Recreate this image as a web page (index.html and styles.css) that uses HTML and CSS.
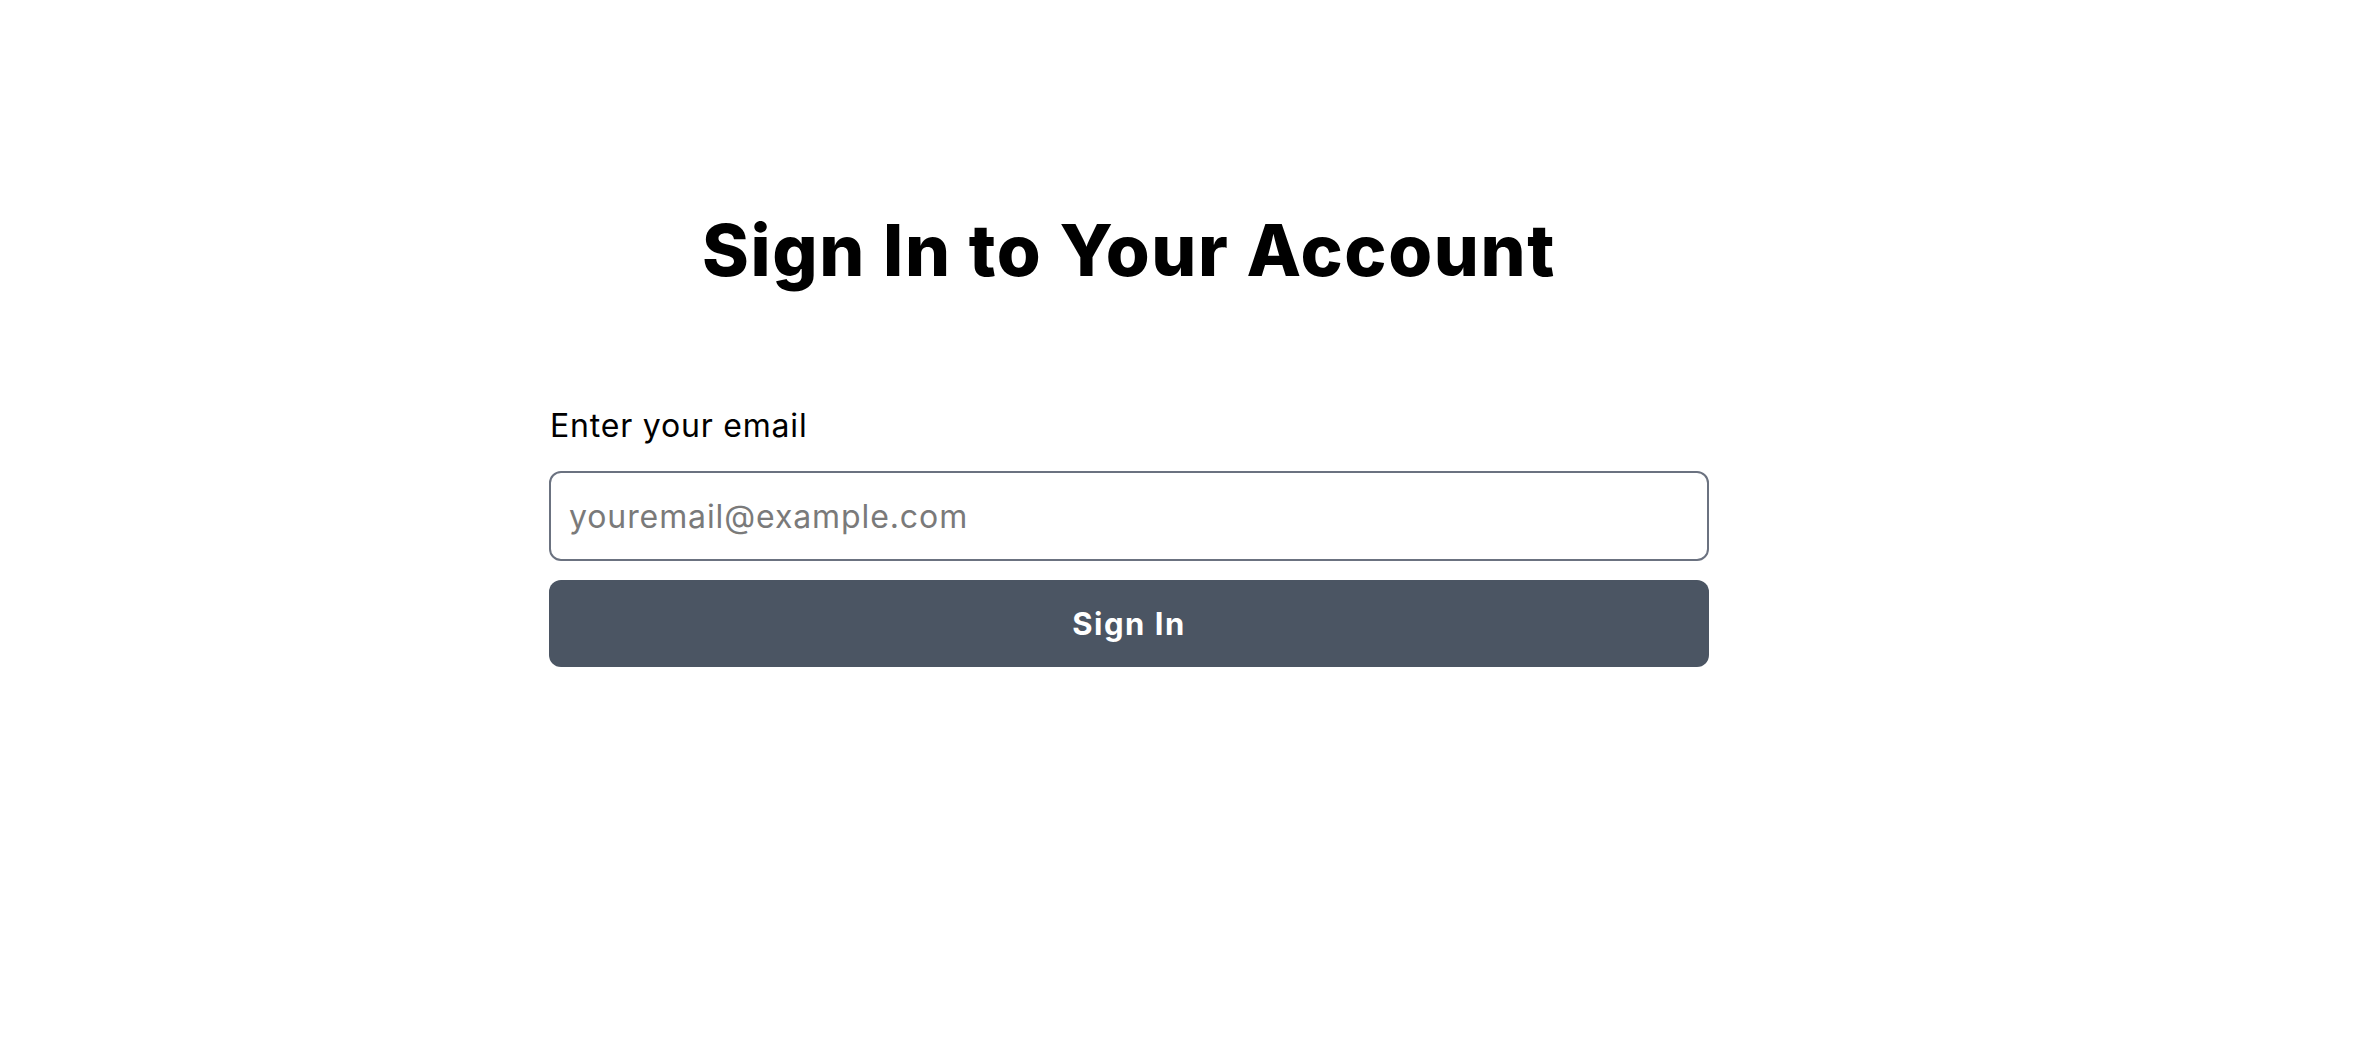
FILE: index.html
```html
<!DOCTYPE html>
<html lang="en">
<head>
<meta charset="utf-8">
<title>Sign In</title>
<link rel="stylesheet" href="styles.css">
</head>
<body>
<main class="page">
  <h1 class="title">Sign In to Your Account</h1>
  <form class="form" onsubmit="return false;">
    <label class="label" for="email">Enter your email</label>
    <input class="input" id="email" type="email" placeholder="youremail@example.com">
    <button class="button" type="submit">Sign In</button>
  </form>
</main>
</body>
</html>
```

FILE: styles.css
```css
html, body {
  margin: 0;
  padding: 0;
  background: #ffffff;
}
body {
  font-family: Inter, "Noto Sans", "Liberation Sans", sans-serif;
  color: #000000;
}
.page {
  width: 1160px;
  margin-left: 549px;
  padding-top: 215px;
  display: flex;
  flex-direction: column;
}
.title {
  margin: 0 0 116px 0;
  font-size: 71px;
  line-height: 71px;
  font-weight: 800;
  text-align: center;
  letter-spacing: 1.6px;
}
.form {
  display: flex;
  flex-direction: column;
}
.label {
  font-size: 32px;
  line-height: 48px;
  margin-bottom: 21px;
  padding-left: 1px;
  letter-spacing: 0.8px;
}
.input {
  box-sizing: border-box;
  height: 90px;
  width: 100%;
  border: 2px solid #6b7280;
  border-radius: 12px;
  padding: 0 18px;
  font-family: inherit;
  font-size: 32px;
  letter-spacing: 0.9px;
  color: #111827;
  outline: none;
}
.input::placeholder {
  color: #7a7a7a;
}
.button {
  box-sizing: border-box;
  margin-top: 19px;
  height: 87px;
  width: 100%;
  border: none;
  border-radius: 12px;
  background: #4b5563;
  color: #ffffff;
  font-family: inherit;
  font-size: 31px;
  font-weight: 700;
  letter-spacing: 1.5px;
  cursor: pointer;
}
```
